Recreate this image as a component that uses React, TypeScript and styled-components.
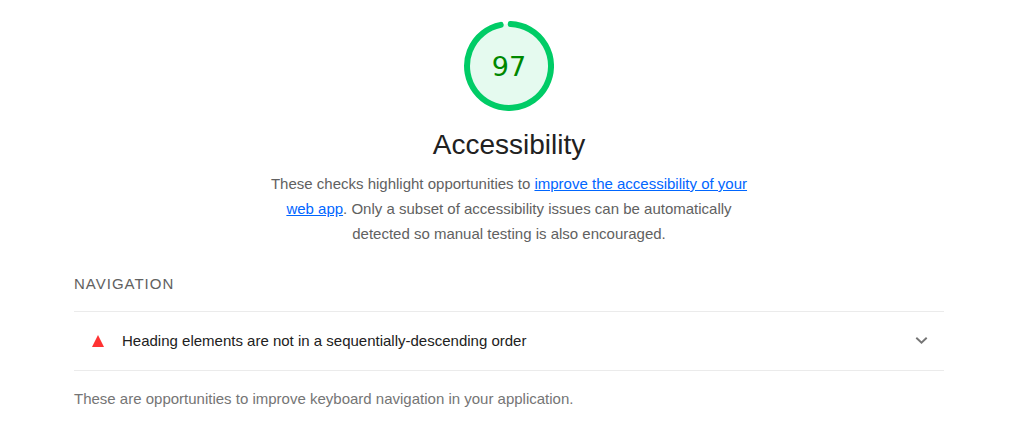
import React from "react";
import styled, { createGlobalStyle } from "styled-components";

const GlobalStyle = createGlobalStyle`
  *, *::before, *::after { box-sizing: border-box; }
  body {
    margin: 0;
    background: #fff;
    color: #212121;
    font-family: "Liberation Sans", Arial, sans-serif;
    font-size: 15px;
    line-height: 25px;
  }
`;

const Report = styled.main`
  max-width: 870px;
  margin: 0 91px 0 74px;
  padding: 21px 0 24px;
`;

const Header = styled.header`
  display: flex;
  flex-direction: column;
  align-items: center;
  text-align: center;
`;

const Gauge = styled.div`
  display: grid;
  place-items: center;
  width: 90px;
  height: 90px;

  > * { grid-area: 1 / 1; }
`;

const GaugeArc = styled.svg`
  display: block;
  width: 90px;
  height: 90px;
`;

const Score = styled.span`
  padding-top: 2px;
  color: #080;
  font-family: "DejaVu Sans", Verdana, sans-serif;
  font-size: 27px;
  line-height: 36px;
`;

const Title = styled.h1`
  margin: 18px 0 10px;
  font-size: 28px;
  font-weight: 400;
  line-height: 32px;
`;

const Description = styled.p`
  max-width: 480px;
  margin: 0;
  color: #616161;
`;

const Link = styled.a`
  color: #06f;
  text-decoration: underline;
`;

const GroupTitle = styled.h2`
  margin: 25px 0 15px;
  color: #616161;
  font-size: 15px;
  font-weight: 400;
  line-height: 25px;
  letter-spacing: 1px;
  text-transform: uppercase;
`;

const AuditRow = styled.button`
  display: flex;
  align-items: center;
  width: 100%;
  height: 60px;
  padding: 0 16px 0 18px;
  border: solid #ebebeb;
  border-width: 1px 0;
  background: none;
  color: #212121;
  font: inherit;
  text-align: left;
  cursor: pointer;
`;

const FailIcon = styled.svg`
  flex: none;
  width: 12px;
  height: 12px;
  margin-right: 18px;
`;

const AuditTitle = styled.span`
  flex: 1;
  padding-bottom: 1px;
`;

const Chevron = styled.svg`
  flex: none;
  width: 13px;
  height: 8px;
`;

const GroupNote = styled.p`
  margin: 15px 0 0;
  color: #757575;
`;

export default function App() {
  return (
    <>
      <GlobalStyle />
      <Report>
        <Header>
          <Gauge>
            <GaugeArc viewBox="0 0 90 90" aria-hidden="true">
              <circle cx="45" cy="45" r="42" fill="#e5faef" />
              <path
                d="M46.7 3.03 A42 42 0 1 1 36.7 3.83"
                fill="none"
                stroke="#0c6"
                strokeWidth="6"
                strokeLinecap="round"
              />
            </GaugeArc>
            <Score>97</Score>
          </Gauge>
          <Title>Accessibility</Title>
          <Description>
            These checks highlight opportunities to{" "}
            <Link href="#accessibility">improve the accessibility of your web app</Link>. Only a
            subset of accessibility issues can be automatically detected so manual testing is
            also encouraged.
          </Description>
        </Header>
        <section>
          <GroupTitle>Navigation</GroupTitle>
          <AuditRow type="button" aria-expanded="false">
            <FailIcon viewBox="0 0 12 12" aria-hidden="true">
              <path d="M6 0 12 12H0z" fill="#f33" />
            </FailIcon>
            <AuditTitle>Heading elements are not in a sequentially-descending order</AuditTitle>
            <Chevron viewBox="0 0 13 8" aria-hidden="true">
              <path d="M1.3 .8 6.5 5.8 11.7 .8" fill="none" stroke="#757575" strokeWidth="1.9" />
            </Chevron>
          </AuditRow>
          <GroupNote>These are opportunities to improve keyboard navigation in your application.</GroupNote>
        </section>
      </Report>
    </>
  );
}
